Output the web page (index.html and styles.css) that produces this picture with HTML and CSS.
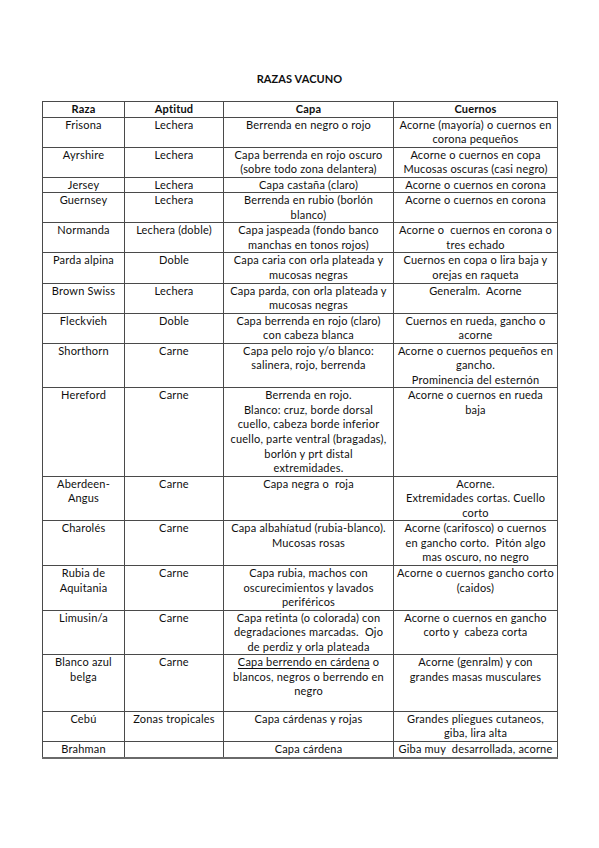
FILE: index.html
```html
<!DOCTYPE html>
<html lang="es">
<head>
<meta charset="utf-8">
<title>Razas vacuno</title>
<link rel="stylesheet" href="styles.css">
</head>
<body>
<div class="page">
  <h1 class="title">RAZAS VACUNO</h1>
  <table class="breeds">
    <colgroup>
      <col class="c-raza"><col class="c-apt"><col class="c-capa"><col class="c-cuer">
    </colgroup>
    <thead>
      <tr><th>Raza</th><th>Aptitud</th><th>Capa</th><th>Cuernos</th></tr>
    </thead>
    <tbody>
      <tr><td>Frisona</td><td>Lechera</td><td>Berrenda en negro o rojo</td><td>Acorne (mayoría) o cuernos en<br>corona pequeños</td></tr>
      <tr><td>Ayrshire</td><td>Lechera</td><td>Capa berrenda en rojo oscuro<br>(sobre todo zona delantera)</td><td>Acorne o cuernos en copa<br>Mucosas oscuras (casi negro)</td></tr>
      <tr><td>Jersey</td><td>Lechera</td><td>Capa castaña (claro)</td><td>Acorne o cuernos en corona</td></tr>
      <tr><td>Guernsey</td><td>Lechera</td><td>Berrenda en rubio (borlón<br>blanco)</td><td>Acorne o cuernos en corona</td></tr>
      <tr><td>Normanda</td><td>Lechera (doble)</td><td>Capa jaspeada (fondo banco<br>manchas en tonos rojos)</td><td>Acorne o&nbsp; cuernos en corona o<br>tres echado</td></tr>
      <tr><td>Parda alpina</td><td>Doble</td><td>Capa caria con orla plateada y<br>mucosas negras</td><td>Cuernos en copa o lira baja y<br>orejas en raqueta</td></tr>
      <tr><td>Brown Swiss</td><td>Lechera</td><td>Capa parda, con orla plateada y<br>mucosas negras</td><td>Generalm.&nbsp; Acorne</td></tr>
      <tr><td>Fleckvieh</td><td>Doble</td><td>Capa berrenda en rojo (claro)<br>con cabeza blanca</td><td>Cuernos en rueda, gancho o<br>acorne</td></tr>
      <tr><td>Shorthorn</td><td>Carne</td><td>Capa pelo rojo y/o blanco:<br>salinera, rojo, berrenda</td><td>Acorne o cuernos pequeños en<br>gancho.<br>Prominencia del esternón</td></tr>
      <tr><td>Hereford</td><td>Carne</td><td>Berrenda en rojo.<br>Blanco: cruz, borde dorsal<br>cuello, cabeza borde inferior<br>cuello, parte ventral (bragadas),<br>borlón y prt distal<br>extremidades.</td><td>Acorne o cuernos en rueda<br>baja</td></tr>
      <tr><td>Aberdeen-<br>Angus</td><td>Carne</td><td>Capa negra o&nbsp; roja</td><td>Acorne.<br>Extremidades cortas. Cuello<br>corto</td></tr>
      <tr><td>Charolés</td><td>Carne</td><td>Capa albahíatud (rubia-blanco).<br>Mucosas rosas</td><td>Acorne (carifosco) o cuernos<br>en gancho corto.&nbsp; Pitón algo<br>mas oscuro, no negro</td></tr>
      <tr><td>Rubia de<br>Aquitania</td><td>Carne</td><td>Capa rubia, machos con<br>oscurecimientos y lavados<br>periféricos</td><td>Acorne o cuernos gancho corto<br>(caidos)</td></tr>
      <tr><td>Limusin/a</td><td>Carne</td><td>Capa retinta (o colorada) con<br>degradaciones marcadas.&nbsp; Ojo<br>de perdiz y orla plateada</td><td>Acorne o cuernos en gancho<br>corto y&nbsp; cabeza corta</td></tr>
      <tr class="tall"><td>Blanco azul<br>belga</td><td>Carne</td><td><u>Capa berrendo en cárdena</u> o<br>blancos, negros o berrendo en<br>negro</td><td>Acorne (genralm) y con<br>grandes masas musculares</td></tr>
      <tr><td>Cebú</td><td>Zonas tropicales</td><td>Capa cárdenas y rojas</td><td>Grandes pliegues cutaneos,<br>giba, lira alta</td></tr>
      <tr class="last"><td>Brahman</td><td></td><td>Capa cárdena</td><td>Giba muy&nbsp; desarrollada, acorne</td></tr>
    </tbody>
  </table>
</div>
</body>
</html>
```

FILE: styles.css
```css
html, body {
  margin: 0;
  padding: 0;
  background: #ffffff;
}

.page {
  width: 599px;
  height: 848px;
  padding-top: 71px;
  box-sizing: border-box;
  font-family: Lato, "Liberation Sans", Arial, sans-serif;
  font-size: 11px;
  color: #0f0f0f;
}

.title {
  margin: 0 0 15px 0;
  font-size: 11px;
  line-height: 15px;
  font-weight: 700;
  text-align: center;
  letter-spacing: 0.1px;
}

.breeds {
  margin-left: 42px;
  width: 515px;
  border-collapse: collapse;
  table-layout: fixed;
  border: 1px solid #3a3a3a;
  border-bottom: 2px solid #6a6a6a;
}

.c-raza { width: 82px; }
.c-apt { width: 99px; }
.c-capa { width: 170px; }
.c-cuer { width: 164px; }

.breeds th,
.breeds td {
  border: 1px solid #4a4a4a;
  padding: 0 1px;
  line-height: 14.55px;
  text-align: center;
  vertical-align: top;
  white-space: nowrap;
  overflow: hidden;
  letter-spacing: 0.2px;
}

.breeds thead th {
  font-weight: 700;
  padding-top: 0;
}

.breeds tbody tr:first-child td {
  padding-top: 0;
}

.breeds tr.tall td {
  padding-bottom: 12px;
}

.breeds u {
  text-decoration: underline;
  text-underline-offset: 2px;
}
```
